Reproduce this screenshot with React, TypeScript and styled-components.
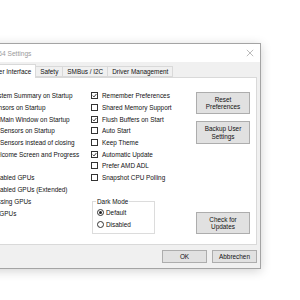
import styled, { createGlobalStyle } from "styled-components";

const Global = createGlobalStyle`
  html, body {
    margin: 0;
    padding: 0;
    background: #ffffff;
    overflow: hidden;
  }
  body {
    width: 300px;
    height: 300px;
    font-family: "Liberation Sans", Arial, sans-serif;
    font-size: 6.4px;
    color: #111;
  }
`;

const Screen = styled.div`
  width: 300px;
  height: 300px;
  padding-top: 43px;
  box-sizing: border-box;
  overflow: hidden;
`;

const Window = styled.div`
  margin-left: -60px;
  width: 321px;
  height: 226px;
  box-sizing: border-box;
  border: 1px solid #a4a4a4;
  background: #f0f0f0;
  box-shadow: 0 2px 10px rgba(0, 0, 0, 0.18);
  display: flex;
  flex-direction: column;
`;

const TitleBar = styled.div`
  height: 18px;
  flex: none;
  background: #fff;
  display: flex;
  align-items: center;
  justify-content: space-between;
  padding: 0 6px 0 31px;
  color: #9a9a9a;
  font-size: 6.6px;
`;

const Close = styled.svg`
  width: 8px;
  height: 8px;
`;

const Body = styled.div`
  flex: 1;
  display: flex;
  flex-direction: column;
  padding: 2px 3px 0 8px;
`;

const TabStrip = styled.div`
  display: flex;
  align-items: flex-end;
  height: 13px;
  padding-left: 9px;
  position: relative;
  z-index: 1;
`;

const Tab = styled.div<{ $active?: boolean }>`
  height: ${(p) => (p.$active ? 14 : 11)}px;
  box-sizing: border-box;
  padding: 0 4px;
  display: flex;
  align-items: center;
  border: 1px solid #d9d9d9;
  border-bottom: ${(p) => (p.$active ? "none" : "1px solid #d9d9d9")};
  border-left: ${(p) => (p.$active ? "1px solid #d9d9d9" : "none")};
  background: ${(p) => (p.$active ? "#fff" : "#f0f0f0")};
  margin-bottom: ${(p) => (p.$active ? -1 : 0)}px;
  white-space: nowrap;
`;

const Panel = styled.div`
  height: 168px;
  box-sizing: border-box;
  background: #fff;
  border: 1px solid #d9d9d9;
  display: grid;
  grid-template-columns: 129px 105px 54px;
  padding: 12px 0 0 12px;
`;

const Column = styled.div`
  display: flex;
  flex-direction: column;
`;

const Row = styled.label`
  height: 11.7px;
  display: flex;
  align-items: center;
  gap: 4px;
  white-space: nowrap;
`;

const Gap = styled.div<{ $h: number }>`
  height: ${(p) => p.$h}px;
  flex: none;
`;

const Box = styled.span`
  width: 7px;
  height: 7px;
  box-sizing: border-box;
  border: 1px solid #333;
  background: #fff;
  flex: none;
  display: flex;
  align-items: center;
  justify-content: center;
`;

const Check = () => (
  <svg width="5" height="5" viewBox="0 0 10 10">
    <path d="M1.5 5.2 L4 7.8 L8.8 2" fill="none" stroke="#222" strokeWidth="1.8" />
  </svg>
);

const CheckRow = ({ label, checked }: { label: string; checked?: boolean }) => (
  <Row>
    <Box>{checked && <Check />}</Box>
    {label}
  </Row>
);

const Group = styled.fieldset`
  margin: 0;
  margin-left: 1px;
  padding: 2px 0 0 4px;
  width: 63px;
  height: 36px;
  box-sizing: border-box;
  border: 1px solid #dcdcdc;
  display: flex;
  flex-direction: column;
`;

const Legend = styled.legend`
  padding: 0 1px;
  margin-left: -1px;
  font-size: 6.4px;
`;

const Radio = styled.span<{ $on?: boolean }>`
  width: 7px;
  height: 7px;
  box-sizing: border-box;
  border-radius: 50%;
  border: 1px solid #333;
  background: #fff;
  flex: none;
  display: flex;
  align-items: center;
  justify-content: center;
  &::after {
    content: "";
    width: 3px;
    height: 3px;
    border-radius: 50%;
    background: ${(p) => (p.$on ? "#222" : "transparent")};
  }
`;

const RadioRow = styled(Row)`
  gap: 2px;
`;

const Buttons = styled.div`
  display: flex;
  flex-direction: column;
  padding-top: 2px;
`;

const Button = styled.button<{ $h?: number; $w?: number }>`
  width: ${(p) => p.$w ?? 54}px;
  height: ${(p) => p.$h ?? 22}px;
  padding: 0;
  margin: 0;
  background: #e1e1e1;
  border: 1px solid #adadad;
  font-family: inherit;
  font-size: 6.4px;
  line-height: 7.4px;
  color: #111;
  text-align: center;
`;

const Footer = styled.div`
  flex: 1;
  display: flex;
  justify-content: flex-end;
  align-items: flex-start;
  gap: 5px;
  padding-top: 5px;
`;

export default function App() {
  return (
    <Screen>
      <Global />
      <Window>
        <TitleBar>
          <span>HWiNFO64 Settings</span>
          <Close viewBox="0 0 10 10">
            <path d="M1 1 L9 9 M9 1 L1 9" stroke="#a0a0a0" strokeWidth="0.9" />
          </Close>
        </TitleBar>
        <Body>
          <TabStrip>
            <Tab $active>General / User Interface</Tab>
            <Tab>Safety</Tab>
            <Tab>SMBus / I2C</Tab>
            <Tab>Driver Management</Tab>
          </TabStrip>
          <Panel>
            <Column>
              <CheckRow label="Show System Summary on Startup" checked />
              <CheckRow label="Show Sensors on Startup" />
              <CheckRow label="Minimize Main Window on Startup" />
              <CheckRow label="Minimize Sensors on Startup" />
              <CheckRow label="Minimize Sensors instead of closing" />
              <CheckRow label="Show Welcome Screen and Progress" checked />
              <Gap $h={12} />
              <CheckRow label="Show Disabled GPUs" />
              <CheckRow label="Show Disabled GPUs (Extended)" />
              <CheckRow label="Show Missing GPUs" />
              <CheckRow label="Show All GPUs" />
            </Column>
            <Column>
              <CheckRow label="Remember Preferences" checked />
              <CheckRow label="Shared Memory Support" />
              <CheckRow label="Flush Buffers on Start" checked />
              <CheckRow label="Auto Start" />
              <CheckRow label="Keep Theme" />
              <CheckRow label="Automatic Update" checked />
              <CheckRow label="Prefer AMD ADL" />
              <CheckRow label="Snapshot CPU Polling" />
              <Gap $h={14} />
              <Group>
                <Legend>Dark Mode</Legend>
                <RadioRow>
                  <Radio $on />
                  Default
                </RadioRow>
                <RadioRow>
                  <Radio />
                  Disabled
                </RadioRow>
              </Group>
            </Column>
            <Buttons>
              <Button>
                Reset
                <br />
                Preferences
              </Button>
              <Gap $h={7} />
              <Button $h={23}>
                Backup User
                <br />
                Settings
              </Button>
              <Gap $h={68} />
              <Button>
                Check for
                <br />
                Updates
              </Button>
            </Buttons>
          </Panel>
          <Footer>
            <Button $w={45} $h={13}>OK</Button>
            <Button $w={45} $h={13}>Abbrechen</Button>
          </Footer>
        </Body>
      </Window>
    </Screen>
  );
}
